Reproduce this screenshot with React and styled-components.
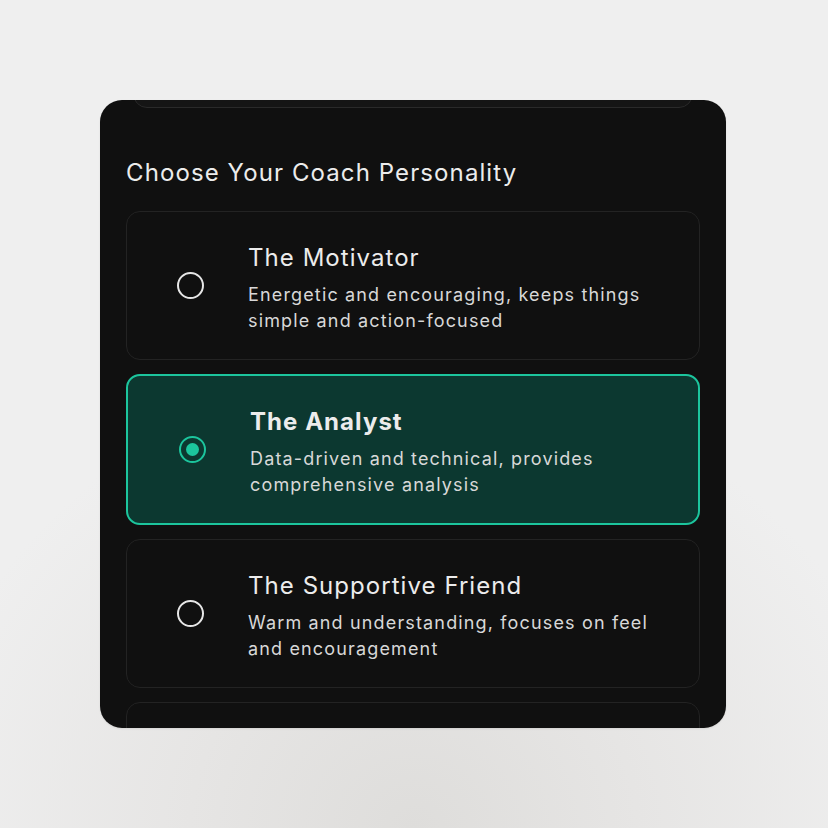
import React, { useLayoutEffect, useRef, useState } from "react";
import styled, { createGlobalStyle } from "styled-components";

const GlobalStyle = createGlobalStyle`
  html, body {
    margin: 0;
    padding: 0;
    height: 100%;
  }
  body {
    background: radial-gradient(ellipse 60% 55% at 50% 100%, #dedddb 0%, #e6e5e4 45%, #efefef 100%), #efefef;
    font-family: Inter, "Noto Sans", sans-serif;
    -webkit-font-smoothing: antialiased;
  }
  #root {
    min-height: 100%;
  }
`;

const Stage = styled.div`
  width: 828px;
  height: 828px;
  box-sizing: border-box;
  padding-right: 2px;
  display: flex;
  align-items: center;
  justify-content: center;
`;

const Panel = styled.div`
  width: 626px;
  height: 628px;
  background: #101010;
  border-radius: 22px;
  overflow: hidden;
  box-shadow: 0 1px 2px rgba(0, 0, 0, 0.08);
`;

const Scroller = styled.div`
  height: 100%;
  overflow-y: auto;
  padding: 0 26px 40px;
  box-sizing: border-box;
  scrollbar-width: none;
  &::-webkit-scrollbar {
    display: none;
  }
`;

const PrevSection = styled.div`
  height: 80px;
  margin: 0 7px;
  border: 1px solid #2a2a2a;
  border-radius: 14px;
  background: #151515;
`;

const Heading = styled.h2`
  margin: 49px 0 22px;
  font-size: 24px;
  line-height: 32px;
  font-weight: 400;
  color: #ececec;
  letter-spacing: 1.1px;
`;

const List = styled.div`
  display: flex;
  flex-direction: column;
  gap: 14px;
`;

const Card = styled.div`
  display: flex;
  align-items: center;
  gap: 44px;
  padding: 25.5px 24px 25.5px ${(p) => (p.$selected ? 51 : 50)}px;
  border-radius: 14px;
  border: ${(p) => (p.$selected ? "2px solid #1cc59d" : "1px solid #232323")};
  background: ${(p) => (p.$selected ? "#0c3830" : "#101010")};
  cursor: pointer;
`;

const Radio = styled.span`
  flex: none;
  width: 27px;
  height: 27px;
  box-sizing: border-box;
  border-radius: 50%;
  border: 2.5px solid ${(p) => (p.$selected ? "#1cc59d" : "#e6e6e6")};
  display: flex;
  align-items: center;
  justify-content: center;
  &::after {
    content: "";
    display: ${(p) => (p.$selected ? "block" : "none")};
    width: 13px;
    height: 13px;
    border-radius: 50%;
    background: #1cc59d;
  }
`;

const Texts = styled.div`
  display: flex;
  flex-direction: column;
  gap: 4px;
  min-width: 0;
`;

const Title = styled.div`
  font-size: 24px;
  line-height: 40px;
  font-weight: ${(p) => (p.$selected ? 700 : 400)};
  color: #ececec;
  letter-spacing: 1.05px;
`;

const Desc = styled.div`
  font-size: 18px;
  line-height: 26px;
  color: #d8d8d8;
  letter-spacing: 1.15px;
`;

const options = [
  {
    id: "motivator",
    title: "The Motivator",
    desc: "Energetic and encouraging, keeps things simple and action-focused",
  },
  {
    id: "analyst",
    title: "The Analyst",
    desc: "Data-driven and technical, provides comprehensive analysis",
  },
  {
    id: "friend",
    title: "The Supportive Friend",
    desc: "Warm and understanding, focuses on feel and encouragement",
  },
  {
    id: "strategist",
    title: "The Strategist",
    desc: "Calm and methodical, focuses on long-term planning",
  },
];

export default function App() {
  const [selected, setSelected] = useState("analyst");
  const scrollRef = useRef(null);

  useLayoutEffect(() => {
    if (scrollRef.current) scrollRef.current.scrollTop = 74;
  }, []);

  return (
    <>
      <GlobalStyle />
      <Stage>
        <Panel>
          <Scroller ref={scrollRef}>
            <PrevSection />
            <Heading>Choose Your Coach Personality</Heading>
            <List>
              {options.map((o) => {
                const isSel = o.id === selected;
                return (
                  <Card key={o.id} $selected={isSel} onClick={() => setSelected(o.id)}>
                    <Radio $selected={isSel} />
                    <Texts>
                      <Title $selected={isSel}>{o.title}</Title>
                      <Desc>{o.desc}</Desc>
                    </Texts>
                  </Card>
                );
              })}
            </List>
          </Scroller>
        </Panel>
      </Stage>
    </>
  );
}
